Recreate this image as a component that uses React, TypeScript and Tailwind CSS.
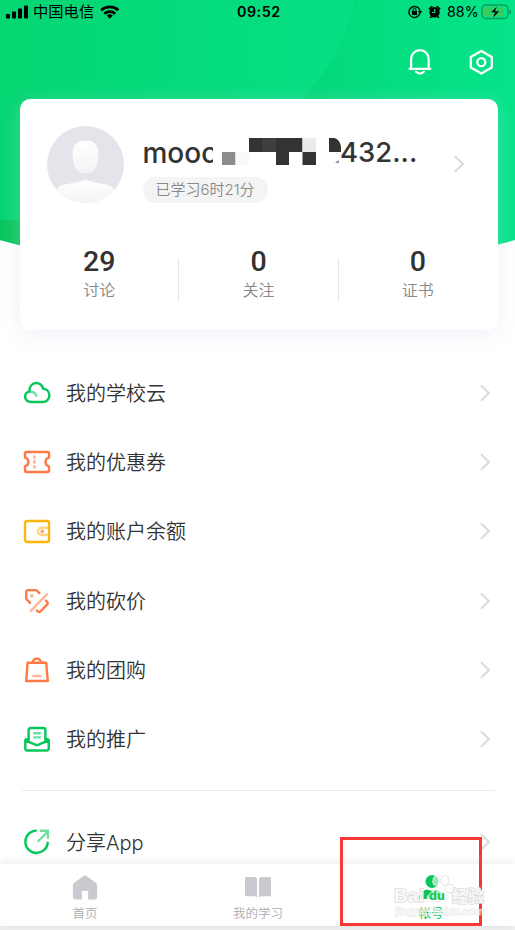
import React from "react";

const cjk = "font-['Inter','Noto_Sans_CJK_SC',sans-serif]";

const GREEN = "#06c65c";
const LIGHT_GREEN = "#6bdfa0";
const ORANGE = "#ff7a42";
const PEACH = "#ffb696";

function Icon({ children }: { children: React.ReactNode }) {
  return (
    <svg width="28" height="28" viewBox="0 0 28 28" fill="none" strokeWidth="2.400" strokeLinecap="round" strokeLinejoin="round" className="shrink-0">
      {children}
    </svg>
  );
}

const CloudIcon = () => (
  <Icon>
    <path d="M6.700 12.800c3-.6 6 1.200 6.600 4" stroke={LIGHT_GREEN} />
    <path d="M8 23C4.600 23 2.100 20.800 2.100 17.800c0-2.600 1.800-4.600 4.200-5.100C6.300 7.600 9 4 13.200 4c3.600 0 6 2.400 6.900 5.800 3.700.4 6.300 3 6.300 6.500 0 3.800-2.800 6.700-6.600 6.700z" stroke={GREEN} />
  </Icon>
);

const TicketIcon = () => (
  <Icon>
    <path d="M2 5.500A1.500 1.500 0 0 1 3.500 4h21A1.500 1.500 0 0 1 26 5.500v4.200a4.400 4.400 0 0 0 0 8.600v4.200A1.500 1.500 0 0 1 24.500 24h-21A1.500 1.500 0 0 1 2 22.500v-4.200a4.400 4.400 0 0 0 0-8.600z" stroke={ORANGE} />
    <path d="M11.400 8.700v.9M11.400 13.500v.9M11.400 18.500v.9" stroke={PEACH} strokeWidth="2.800" />
  </Icon>
);

const WalletIcon = () => (
  <Icon>
    <path d="M25.500 10.800h-7a3.600 3.600 0 0 0 0 7.200h7" stroke="#ffd97a" />
    <rect x="2" y="4" width="24" height="21" rx="2" stroke="#ffb50f" />
    <circle cx="19.300" cy="14.400" r="1.800" fill="#ff9f73" />
  </Icon>
);

const TagIcon = () => (
  <Icon>
    <path d="M24 7.200L7.800 23.800" stroke={PEACH} />
    <path d="M16.400 6.200L14.100 3.700a2 2 0 0 0-1.400-.6H5.200a2 2 0 0 0-2 2v6a2 2 0 0 0 .6 1.400l3.200 3.400" stroke={ORANGE} />
    <path d="M23 13.700l1.300 1.300a1.600 1.600 0 0 1 0 2.300l-7 7.200a1.800 1.800 0 0 1-2.500 0l-.900-.9" stroke={ORANGE} />
    <circle cx="8.800" cy="8.800" r="1.900" fill={PEACH} />
  </Icon>
);

const BagIcon = () => (
  <Icon>
    <path d="M9.800 6.500a4 4 0 0 1 8 0" stroke={ORANGE} />
    <path d="M4.600 6.700h18.600l1.600 18.300H3.200z" stroke={ORANGE} />
    <path d="M10.300 20h7.400" stroke={PEACH} />
  </Icon>
);

const PromoteIcon = () => (
  <Icon>
    <path d="M5.600 15V5a2 2 0 0 1 2-2h12.800a2 2 0 0 1 2 2v10" stroke={GREEN} />
    <path d="M5.600 14.300H3.500a1.200 1.200 0 0 0-1.200 1.200v8.200a1.800 1.800 0 0 0 1.800 1.800h19.800a1.800 1.800 0 0 0 1.800-1.800v-8.200a1.200 1.200 0 0 0-1.200-1.200h-2.100M2.800 15.600l10.200 4.200q1 .4 2 0l10.200-4.200" stroke={GREEN} />
    <path d="M11.200 8.200h5.800M11.200 12.400h5.800" stroke={LIGHT_GREEN} />
  </Icon>
);

const ShareIcon = () => (
  <Icon>
    <path d="M12.800 2.600a11.200 11.200 0 1 0 11.900 12.200" stroke={GREEN} />
    <path d="M15.400 13l9-9M18 2.800h6.900v7" stroke={LIGHT_GREEN} strokeLinejoin="miter" />
  </Icon>
);

const Chevron = () => (
  <svg width="12" height="18" viewBox="0 0 12 18" fill="none" stroke="#dcdcdc" strokeWidth="2.300" className="shrink-0">
    <path d="M2 1.300L9.800 9l-7.800 7.700" />
  </svg>
);

const rows = [
  { label: "我的学校云", icon: <CloudIcon /> },
  { label: "我的优惠券", icon: <TicketIcon /> },
  { label: "我的账户余额", icon: <WalletIcon /> },
  { label: "我的砍价", icon: <TagIcon /> },
  { label: "我的团购", icon: <BagIcon /> },
  { label: "我的推广", icon: <PromoteIcon /> },
];

function Row({ label, icon }: { label: string; icon: React.ReactNode }) {
  return (
    <div className="flex h-[69.300px] shrink-0 items-center pl-[23px] pr-[24px]">
      {icon}
      <span className={`ml-[15px] flex-1 pt-[2px] text-[20px] font-[350] leading-none text-[#333] ${cjk}`}>{label}</span>
      <Chevron />
    </div>
  );
}

function HeaderBackdrop() {
  return (
    <svg className="absolute left-0 top-0" width="515" height="262" viewBox="0 0 515 262">
      <defs>
        <linearGradient id="base" x1="0" y1="0" x2="1" y2="0">
          <stop offset="0" stopColor="#05cf6c" />
          <stop offset=".6" stopColor="#04d97a" />
          <stop offset="1" stopColor="#05e48a" />
        </linearGradient>
        <linearGradient id="disc" x1="0" y1="0" x2="1" y2="0">
          <stop offset="0" stopColor="#04d671" />
          <stop offset="1" stopColor="#06e084" />
        </linearGradient>
        <clipPath id="sheet">
          <path d="M0 0H515V240Q257 312 0 240Z" />
        </clipPath>
      </defs>
      <g clipPath="url(#sheet)">
        <rect width="515" height="262" fill="url(#base)" />
        <path d="M0 0H354C345 45 330 68 302 98C230 180 120 224 0 220Z" fill="url(#disc)" />
        <path d="M0 219.500Q12 221 40 221V262H0Z" fill="#06c75b" />
      </g>
    </svg>
  );
}

function StatusBar() {
  return (
    <div className="relative flex h-[24px] shrink-0 items-center text-black">
      <svg width="22" height="14" viewBox="0 0 22 14" className="ml-[6px]">
        <rect x="0" y="9" width="4" height="4.500" rx="1" />
        <rect x="6" y="6.500" width="4" height="7" rx="1" />
        <rect x="12" y="3.500" width="4" height="10" rx="1" />
        <rect x="18" y=".5" width="4" height="13" rx="1" />
      </svg>
      <span className={`ml-[5px] w-[62px] whitespace-nowrap text-[15.300px] leading-[20px] ${cjk}`}>中国电信</span>
      <svg width="20" height="14" viewBox="0 0 20 14" fill="none" stroke="#000" strokeWidth="2.700" className="ml-[5px] -mt-px">
        <path d="M1.200 5.200a12.600 12.600 0 0 1 17.200 0M4.400 8.700a8 8 0 0 1 10.800 0" />
        <path d="M9.800 13.700l-3-3.100a4.400 4.400 0 0 1 6 0z" fill="#000" stroke="none" />
      </svg>
      <span className="ml-[117px] w-[46px] text-[14.300px] font-semibold leading-[20px] tracking-[0.500px] font-['Inter',sans-serif]">09:52</span>
      <svg width="15" height="14" viewBox="0 0 15 14" fill="none" stroke="#000" strokeWidth="1.300" className="ml-[125px]">
        <path d="M11.900 7.200A5.500 5.500 0 1 1 8.600 2" />
        <path d="M8.300 1.700a5.500 5.500 0 0 1 3.700 5.300" />
        <path d="M9.700 6h4.600l-2.300 2.800z" fill="#000" stroke="none" />
        <rect x="4" y="6" width="5" height="4" fill="#000" stroke="none" />
        <path d="M5 6.300V5a1.500 1.500 0 0 1 3 0v1.300" strokeWidth="1" />
      </svg>
      <svg width="13" height="14" viewBox="0 0 13 14" className="ml-[5px]">
        <circle cx="6.500" cy="7.300" r="5.200" />
        <path d="M.5 3.500L3.500.8l1.500 1L1.200 5zM12.500 3.500L9.500.8 8 1.800 11.800 5zM2.500 11l-1 2h1.600l1-1zM10.500 11l1 2H9.900l-1-1z" />
        <path d="M6.700 4v3.500H4" fill="none" stroke="#05db7d" strokeWidth="1.200" />
      </svg>
      <span className="ml-[6px] w-[32px] text-[14.300px] leading-[20px] font-['Inter',sans-serif]">88%</span>
      <svg width="31" height="16" viewBox="0 0 31 16" className="ml-[2px]">
        <rect x="1" y="1" width="26" height="13.500" rx="4" fill="none" stroke="#079c58" strokeWidth="1.400" />
        <rect x="3" y="3" width="20" height="9.500" rx="2" fill="#38cc5c" />
        <path d="M28.500 5.500q1.800.5 1.800 2.300t-1.800 2.300z" fill="#079c58" />
        <path d="M16.400 1.500L9.500 8.600h4l-1.800 5.900 7.100-7.400h-4.300z" stroke="#05e185" strokeWidth=".7" />
      </svg>
    </div>
  );
}

function Avatar() {
  return (
    <svg width="77" height="77" viewBox="0 0 77 77" className="shrink-0">
      <defs>
        <clipPath id="avatar"><circle cx="38.500" cy="38.500" r="38.500" /></clipPath>
        <linearGradient id="figure" x1="0" y1="0" x2="0" y2="1">
          <stop offset="0" stopColor="#fff" />
          <stop offset="1" stopColor="#f3f4f4" />
        </linearGradient>
      </defs>
      <g clipPath="url(#avatar)">
        <rect width="77" height="77" fill="#e4e5ea" />
        <path d="M38.500 14.500C29.500 14.500 25 20 25.500 29C26 40 30 47.500 38.500 47.500S51 40 51.500 29C52 20 47.500 14.500 38.500 14.500Z" fill="url(#figure)" />
        <path d="M9 68C9 61 14 59 20 58Q31 56.500 38.500 53.500Q46 56.500 57 58C63 59 68 61 68 68V77H9Z" fill="url(#figure)" />
      </g>
    </svg>
  );
}

function Mosaic() {
  return (
    <svg width="128" height="30" viewBox="0 0 128 30" className="-ml-px -mr-px shrink-0">
      <rect width="6" height="30" fill="#fff" />
      <rect x="9" y="14" width="13.500" height="13" fill="#8c8c8c" />
      <rect x="22.500" y="14" width="13.500" height="13" fill="#f9f9f9" />
      <rect x="36" y="0" width="53.500" height="14" fill="#333" />
      <rect x="49.300" y="0" width="13.500" height="14" fill="#3f3f3f" />
      <rect x="89.500" y="0" width="13.500" height="14" fill="#ebebeb" />
      <rect x="63" y="14" width="13" height="13" fill="#333" />
      <rect x="89.500" y="14" width="13.500" height="13" fill="#333" />
      <path d="M116 0h5.500c4.500 1 7 6 7 14H116z" fill="#333" />
      <path d="M122 25l4-3v3z" fill="#888" />
    </svg>
  );
}

function Stat({ value, label }: { value: string; label: string }) {
  return (
    <div className="flex w-[160px] flex-col items-center">
      <span className="text-[28.500px] font-medium leading-[34px] text-[#333] font-['Roboto',sans-serif]">{value}</span>
      <span className={`mt-px text-[16px] font-[350] leading-[20px] text-[#888] ${cjk}`}>{label}</span>
    </div>
  );
}

function ProfileCard() {
  return (
    <div className="ml-[19.500px] mt-[19.500px] h-[231.500px] w-[478px] shrink-0 rounded-[10px] bg-white shadow-[0_4px_22px_rgba(200,212,230,0.320)]">
      <div className="flex items-start pl-[27.500px] pt-[27.500px]">
        <Avatar />
        <div className="ml-[18.500px] w-[295.500px] pt-[11px]">
          <div className="flex h-[32px] items-center whitespace-nowrap text-[28px] font-[450] leading-none text-[#333] font-['Inter',sans-serif]">
            <span className="w-[71.500px]">mooc</span>
            <Mosaic />
            <span className="text-[27.500px]">432...</span>
          </div>
          <div className={`mt-[8px] flex h-[26px] w-[125px] items-center justify-center rounded-full bg-[#f4f4f4] text-[15px] font-[350] text-[#888] ${cjk}`}>
            已学习6时21分
          </div>
        </div>
        <div className="ml-[15px] mt-[29px]"><Chevron /></div>
      </div>
      <div className="mt-[42px] flex items-start">
        <Stat value="29" label="讨论" />
        <div className="-mx-[0.500px] mt-[13px] h-[44px] w-px bg-[#e6e6e6]" />
        <Stat value="0" label="关注" />
        <div className="-mx-[0.500px] mt-[13px] h-[44px] w-px bg-[#e6e6e6]" />
        <Stat value="0" label="证书" />
      </div>
    </div>
  );
}

function Tab({ label, active, children }: { label: string; active?: boolean; children: React.ReactNode }) {
  return (
    <div className="flex w-[173px] shrink-0 flex-col items-center pt-[10px]">
      <svg width="28" height="28" viewBox="0 0 28 28" fill={active ? GREEN : "#c9cad0"}>{children}</svg>
      <span className={`mt-[5px] text-[12.500px] leading-[14px] ${active ? "text-[#06c65c]" : "font-[350] text-[#aaabb2]"} ${cjk}`}>{label}</span>
    </div>
  );
}

function Watermark() {
  return (
    <div className="absolute left-[392px] top-[872px] h-[48px] w-[96px]">
      <svg width="96" height="48" viewBox="0 0 96 48" className="font-['Liberation_Sans','Noto_Sans_CJK_SC',sans-serif]" fill="#fff" fillOpacity=".8" stroke="#dedede" strokeWidth="1.600" paintOrder="stroke">
        <g fillOpacity=".55" strokeWidth="1.200">
          <ellipse cx="44" cy="8.500" rx="3" ry="4.800" transform="rotate(12 44 8.500)" />
          <ellipse cx="52.800" cy="8.500" rx="3.600" ry="5" />
          <ellipse cx="57.700" cy="16.500" rx="3.800" ry="4.200" />
        </g>
        <path d="M40 20Q42 15 46 15Q50 15.500 53 20.500Q58 26 54 29Q50 31 46 29Q37 31 35 28Q34 24 40 20Z" fillOpacity=".7" strokeWidth=".8" />
        <text x="2" y="30" fontSize="19" fontWeight="bold" textLength="30">Bai</text>
        <text x="37" y="27.500" fontSize="13" fontWeight="bold" fill={GREEN} fillOpacity="1" stroke="none">du</text>
        <text x="60" y="30" fontSize="16" fontWeight="bold" textLength="32">经验</text>
        <text x="3" y="43" fontSize="10.500" fontWeight="bold" textLength="89" fillOpacity=".5" strokeWidth=".8" strokeOpacity=".7">jingyan.baidu.com</text>
      </svg>
    </div>
  );
}

export default function App() {
  return (
    <div className="relative flex h-[930px] w-[515px] flex-col overflow-hidden bg-white">
      <HeaderBackdrop />
      <div className="relative flex min-h-0 flex-1 flex-col overflow-hidden">
        <StatusBar />
        <div className="mt-[22px] flex h-[33px] shrink-0 justify-end gap-[33px] pr-[20px]">
          <svg width="28" height="32" viewBox="0 0 28 32" fill="none" stroke="#fff" strokeWidth="2.200" strokeLinecap="round" strokeLinejoin="round">
            <path d="M3.500 22.800H24.300M5.100 22.500V13a8.800 8.800 0 0 1 17.600 0v9.500" />
            <path d="M10 25.800q3.900 3.600 7.800 0" />
          </svg>
          <svg width="28" height="32" viewBox="0 0 28 32" fill="none" stroke="#fff" strokeWidth="2.300" strokeLinejoin="round">
            <path d="M14.300 5L24.800 11V21.500L14.300 27.500L3.800 21.500V11Z" />
            <circle cx="14.300" cy="16.200" r="4" />
          </svg>
        </div>
        <ProfileCard />
        <div className="mt-[28px] flex flex-col">
          {rows.map((row) => <Row key={row.label} {...row} />)}
        </div>
        <div className="ml-[22px] mt-[16px] h-px w-[473px] shrink-0 bg-[#ebebeb]" />
        <div className="mt-[17px] flex flex-col"><Row label="分享App" icon={<ShareIcon />} /></div>
      </div>
      <div className="relative flex h-[62px] shrink-0 justify-center bg-white pl-px shadow-[0_-2px_10px_rgba(0,0,0,0.080)]">
        <Tab label="首页">
          <path d="M12.800 1.700q1.200-.9 2.400 0L25 9a2.800 2.800 0 0 1 1.100 2.200V23a2.500 2.500 0 0 1-2.500 2.500H17.200V17H10.800v8.500H4.400A2.500 2.500 0 0 1 1.900 23V11.200A2.800 2.800 0 0 1 3 9z" />
        </Tab>
        <Tab label="我的学习">
          <path d="M2 3H10.500Q13 3 13 5.500V23.500Q12 22.300 10 22.300H2Q1 22.300 1 21.500V4Q1 3 2 3ZM26 3H17.500Q15 3 15 5.500V23.500Q16 22.300 18 22.300H26Q27 22.300 27 21.500V4Q27 3 26 3Z" />
        </Tab>
        <Tab label="帐号" active>
          <circle cx="15" cy="7.500" r="6.500" />
          <path d="M2 25V23Q5 16 10 15.500L14.500 17L19 15.500Q25 16 27 23V25Z" />
        </Tab>
      </div>
      <div className="h-[4px] shrink-0 bg-[#efefef]" />
      <div className="absolute left-[340px] top-[837px] h-[89px] w-[142px] border-[3px] border-[#fb3636]" />
      <Watermark />
    </div>
  );
}
